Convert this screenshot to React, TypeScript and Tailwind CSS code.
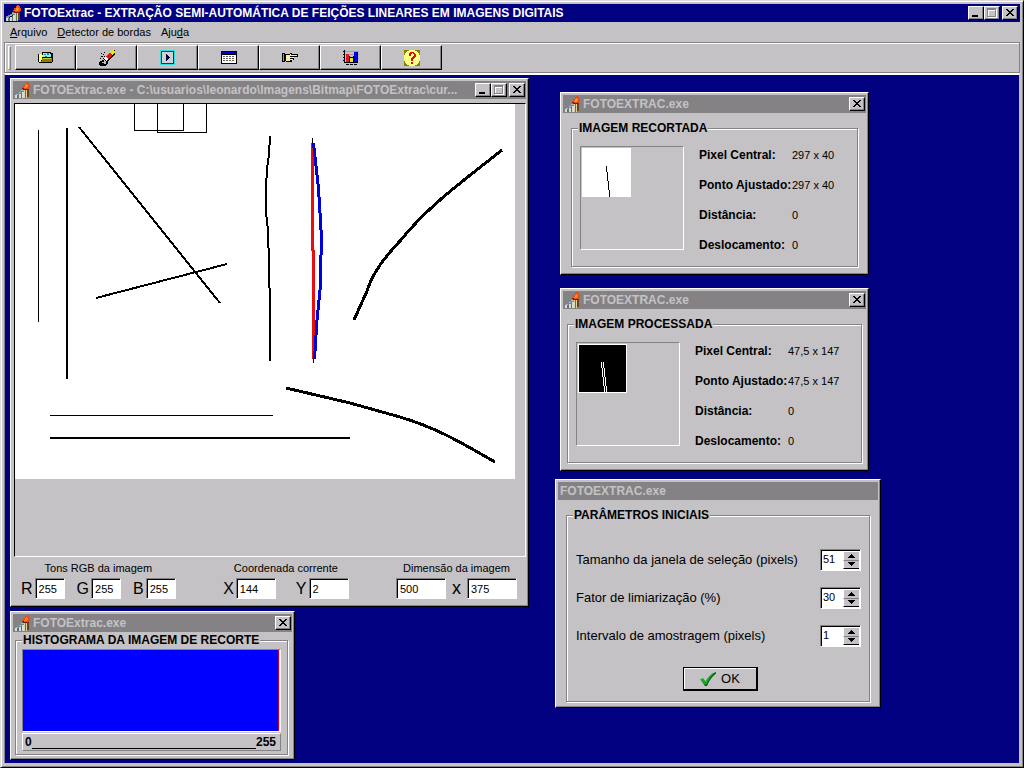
import React, { useId, useState } from "react";

const FACE = "bg-[#c4c2c4]";
const RAISED =
  "border border-t-white border-l-white border-r-black border-b-black shadow-[inset_-1px_-1px_#848284]";
const SUNKEN =
  "border border-t-[#848284] border-l-[#848284] border-r-white border-b-white shadow-[inset_1px_1px_#000]";

function AppIcon() {
  return (
    <svg aria-hidden="true" className="h-4 w-4 shrink-0" viewBox="0 0 16 16" shapeRendering="crispEdges">
      <path d="M6 7h3v3h-3v1h-2v1h-2v1h-2v-2h2v-1h2v-1h2z" fill="#708c94" />
      <path d="M6 8h3v1h-3z M4 10h2v1h-2z M1 12h2v1h-2z" fill="#a8b8bc" />
      <path d="M0 13h2v3h-2z M4 12h2v4h-2z M7 10h2v6h-2z" fill="#d8dcd8" />
      <path d="M2 13h2v3h-2z M6 11h1v5h-1z" fill="#647068" />
      <path d="M9 8h3v8h-3z" fill="#d9d2a4" />
      <path d="M10 8h1v8h-1z" fill="#5a7a4a" />
      <path d="M12 7h2v8h-2z" fill="#6a4020" />
      <path d="M11 0h2v1h1v2h1v3h-1v1h-7v-2h1v-2h2v-2h1z" fill="#f04a12" />
      <path d="M11 2h1v1h1v2h-1v1h-3v-1h1v-2h1z" fill="#ff8a2a" />
      <path d="M7 6h2v1h5v1h-6v-1h-1z" fill="#7c1c08" />
    </svg>
  );
}

function CaptionButton({ kind }: { kind: "Minimizar" | "Maximizar" | "Fechar" }) {
  return (
    <button
      type="button"
      aria-label={kind}
      className={`flex h-[14px] w-4 items-center justify-center ${FACE} ${RAISED}`}
    >
      <svg aria-hidden="true" className="h-3 w-3.5 shrink-0" viewBox="0 0 14 12" shapeRendering="crispEdges">
        {kind === "Minimizar" && <path d="M3 8h6v2h-6z" fill="#000" />}
        {kind === "Maximizar" && (
          <>
            <path d="M3 2h9v9h-9z M4 4v6h7v-6z" fill="#fff" fillRule="evenodd" />
            <path d="M2 1h9v9h-9z M3 3v6h7v-6z" fill="#848284" fillRule="evenodd" />
            <path d="M3 3h7v1h-7z M3 3h1v6h-1z" fill="#fff" />
          </>
        )}
        {kind === "Fechar" && (
          <path
            d="M3 2h2v1h-2z M4 3h2v1h-2z M5 4h2v1h-2z M6 5h2v1h-2z M5 6h2v1h-2z M4 7h2v1h-2z M3 8h2v1h-2z M9 2h2v1h-2z M8 3h2v1h-2z M7 4h2v1h-2z M7 6h2v1h-2z M8 7h2v1h-2z M9 8h2v1h-2z"
            fill="#000"
          />
        )}
      </svg>
    </button>
  );
}

function TitleBar({
  title,
  active = false,
  icon = true,
  controls = "close",
}: {
  title: string;
  active?: boolean;
  icon?: boolean;
  controls?: "all" | "close" | "none";
}) {
  return (
    <header
      className={`flex h-[18px] shrink-0 items-center gap-0.5 pl-0.5 ${
        active ? "bg-[#000080] pr-0.5 text-white" : "bg-[#848284] pr-px text-[#c4c2c4]"
      }`}
    >
      {icon && <AppIcon />}
      <h2 className="min-w-0 flex-1 text-xs leading-4 font-bold whitespace-nowrap">{title}</h2>
      {controls === "all" && (
        <div className="flex">
          <CaptionButton kind="Minimizar" />
          <CaptionButton kind="Maximizar" />
        </div>
      )}
      {controls !== "none" && <CaptionButton kind="Fechar" />}
    </header>
  );
}

function Win({ className, children }: { className: string; children: React.ReactNode }) {
  return (
    <section className={`absolute flex flex-col p-0.5 ${FACE} ${RAISED} ${className}`}>{children}</section>
  );
}

function Group({ title, className, children }: { title: string; className: string; children: React.ReactNode }) {
  return (
    <fieldset
      className={`min-w-0 border border-[#848284] shadow-[1px_1px_#fff,inset_1px_1px_#fff] ${className}`}
    >
      <legend className={`ml-1.5 px-px text-xs leading-4 font-bold ${FACE}`}>{title}</legend>
      {children}
    </fieldset>
  );
}

const toolbar: { label: string; icon: React.ReactNode }[] = [
  {
    label: "Abrir",
    icon: (
      <>
        <path d="M0 4h4v-2h9v1h2v9h-1v1h-13v-1h-1z" fill="#000" />
        <path d="M1 4h3v1h1v2h-1v3h-1v2h-2z" fill="#ffff84" />
        <path d="M5 3h7v1h1v3h-8z" fill="#8ff0f0" />
        <path d="M6 4h2v1h-2z M9 3h2v2h-2z M7 6h2v1h-2z" fill="#1c8a8a" />
        <path d="M4 8h10v4h-11v-1h1z" fill="#848200" />
        <path d="M5 8h8v1h-8z" fill="#c8c83c" />
      </>
    ),
  },
  {
    label: "Apagar",
    icon: (
      <>
        <path d="M16 1L6 11" stroke="#000" strokeWidth="5" />
        <path d="M15 1L11 5" stroke="#f2e21c" strokeWidth="3" />
        <path d="M12 4L8 8" stroke="#e01818" strokeWidth="3" />
        <path d="M8 8L6 10" stroke="#fff" strokeWidth="3" />
        <path d="M0 12h1v-1h2v-1h2v2h-2v1h2v1h2v-2h1v-1h1v3h-1v1h-1v1h-6v-1h-1z M2 3h1v1h-1z M5 2h1v1h-1z M4 4h1v1h-1z M2 6h2v1h-2z M1 8h1v1h-1z M4 8h1v1h-1z M5 6h1v1h-1z" fill="#000" />
      </>
    ),
  },
  {
    label: "Executar",
    icon: (
      <>
        <path d="M0 0h15v15h-15z" fill="#30dede" />
        <path d="M1 1h13v13h-13z" fill="#303430" />
        <path d="M2 2h11v11h-11z" fill="#d2d0d2" />
        <path d="M6 4h1v1h1v1h1v1h1v1h-1v1h-1v1h-1v1h-1z" fill="#000040" />
      </>
    ),
  },
  {
    label: "Tabela",
    icon: (
      <>
        <path d="M0 1h16v13h-16z" fill="#000" />
        <path d="M1 2h14v2h-14z" fill="#0000d8" />
        <path d="M1 5h14v8h-14z" fill="#fff" />
        <path d="M2 6h12v1h-12z M2 8h12v1h-12z M2 10h12v1h-12z" fill="#606060" />
        <path d="M4 5h1v8h-1z M7 5h1v8h-1z M10 5h1v8h-1z M13 5h1v8h-1z" fill="#fff" />
      </>
    ),
  },
  {
    label: "Selecionar",
    icon: (
      <>
        <path d="M0 3h3v9h-3z" fill="#000" />
        <path d="M1 4h1v7h-1z" fill="#20c8c8" />
        <path d="M3 4h5v-1h2v1h6v3h-4v3h-2v2h-6v-1h-1z" fill="#000" />
        <path d="M4 5h4v-1h1v1h6v1h-5v1h2v1h-3v1h2v1h-3v1h-4z" fill="#ffef9c" />
        <path d="M8 6h3v1h-3z M8 8h3v1h-3z" fill="#000" />
      </>
    ),
  },
  {
    label: "Histograma",
    icon: (
      <>
        <path d="M2 1h14v1h-14z M2 4h14v1h-14z M2 8h14v1h-14z" fill="#a09ea0" />
        <path d="M1 0h1v12h13v1h-14z" fill="#000" />
        <path d="M0 1h1v1h-1z M0 4h1v1h-1z M0 7h1v1h-1z M0 10h1v1h-1z M3 14h3v1h-3z M7 14h3v1h-3z M11 14h3v1h-3z" fill="#000" />
        <path d="M3 4h3v8h-3z" fill="#e01818" />
        <path d="M6 6h1v6h-1z M7 7h3v1h-3z" fill="#000" />
        <path d="M7 8h3v4h-3z" fill="#f2e21c" />
        <path d="M11 2h3v10h-3z" fill="#0000e0" />
        <path d="M10 6h1v6h-1z M14 2h1v10h-1z" fill="#000" />
      </>
    ),
  },
  {
    label: "Ajuda",
    icon: (
      <>
        <path d="M0 0h16v16h-16z" fill="#848200" />
        <path d="M5 0h6v1h2v1h1v1h1v2h1v6h-1v2h-1v1h-1v1h-2v1h-6v-1h-2v-1h-1v-1h-1v-2h-1v-6h1v-2h1v-1h1v-1h2z" fill="#ffff84" />
        <path d="M6 2h4v1h1v1h1v3h-1v1h-1v1h-1v2h-2v-3h1v-1h1v-1h1v-2h-1v-1h-1v1h-1v2h-2v-3h1z M7 12h2v2h-2z" fill="#d01010" />
      </>
    ),
  },
];

function SourceImage() {
  return (
    <svg
      role="img"
      aria-label="Imagem"
      className="block h-[375px] w-[500px] bg-white"
      viewBox="0 0 500 375"
      fill="none"
      stroke="#000"
      strokeWidth="2"
      shapeRendering="crispEdges"
    >
      <path d="M23.500 26V218 M119.500 -2V26.500H168.500V-2 M142.500 -2V28.500H191.500V-2" strokeWidth="1" />
      <path d="M52 24V275 M64 23L205 199 M81 194L212 160" />
      <path d="M255 32L254 50L252 65L251 84V108L253 126L254 160L255 206V257" />
      <path d="M35 311.500H258" strokeWidth="1" />
      <path d="M35 334H335" />
      <path
        d="M487 46L468 61C440 83 410 106 385 137C370 153 358 168 352 187L339 216"
        strokeWidth="3"
      />
      <path d="M271 284L335 299L385 313C425 325 450 341 480 358" strokeWidth="3" />
      <path d="M297.500 34V40 M298.500 254V259" strokeWidth="1" />
      <path d="M297.500 39V146L298.500 147V255" stroke="#e60e0e" strokeWidth="3" />
      <path d="M298.500 39L303.500 84L306 126V151L305 186L302 216L299.500 255" stroke="#0000dc" strokeWidth="3" />
    </svg>
  );
}

function Field({
  label,
  value,
  width,
  hideLabel = false,
}: {
  label: string;
  value: string;
  width: string;
  hideLabel?: boolean;
}) {
  const id = useId();
  return (
    <div className="flex items-center gap-0.5">
      {!hideLabel && (
        <label htmlFor={id} className="text-base leading-5">
          {label}
        </label>
      )}
      <input
        id={id}
        aria-label={label}
        defaultValue={value}
        className={`h-[21px] bg-white px-[3px] text-[11px] leading-4 outline-none ${SUNKEN} ${width}`}
      />
    </div>
  );
}

function InfoPanel({
  title,
  groupClass,
  preview,
  rows,
}: {
  title: string;
  groupClass: string;
  preview: React.ReactNode;
  rows: [string, string][];
}) {
  return (
    <Group title={title} className={groupClass}>
      <div className="flex gap-[15px] pt-1 pl-2">
        <div className="mt-1.5 h-[104px] w-[104px] shrink-0 border border-t-[#848284] border-l-[#848284] border-r-white border-b-white">
          {preview}
        </div>
        <dl className="grid h-[120px] flex-1 grid-cols-[93px_1fr] grid-rows-4 items-center leading-4">
          {rows.map(([k, v]) => (
            <React.Fragment key={k}>
              <dt className="text-xs leading-4 font-bold whitespace-nowrap">{k}</dt>
              <dd className="text-[11px] leading-4">{v}</dd>
            </React.Fragment>
          ))}
        </dl>
      </div>
    </Group>
  );
}

function Spinner({ label, initial }: { label: string; initial: number }) {
  const id = useId();
  const [value, setValue] = useState(initial);
  return (
    <div className="flex items-center justify-between">
      <label htmlFor={id} className="text-[13px] leading-5">
        {label}
      </label>
      <div className={`flex h-[22px] w-[41px] bg-white p-px ${SUNKEN}`}>
        <input
          id={id}
          value={value}
          onChange={(e) => setValue(Number(e.target.value) || 0)}
          className="w-5 min-w-0 flex-1 self-start bg-transparent pl-px text-[11px] leading-4 outline-none"
        />
        <div className="flex w-4 flex-col">
          <button
            type="button"
            aria-label={`Aumentar ${label}`}
            onClick={() => setValue(value + 1)}
            className={`flex flex-1 items-center justify-center border-t border-l border-white ${FACE}`}
          >
            <svg aria-hidden="true" className="h-1 w-[7px]" viewBox="0 0 7 4" shapeRendering="crispEdges">
              <path d="M3 0h1v1h1v1h1v1h1v1h-7v-1h1v-1h1v-1h1z" fill="#000" />
            </svg>
          </button>
          <button
            type="button"
            aria-label={`Diminuir ${label}`}
            onClick={() => setValue(value - 1)}
            className={`flex flex-1 items-center justify-center border-t border-b border-l border-t-[#848284] border-b-black border-l-white ${FACE}`}
          >
            <svg aria-hidden="true" className="h-1 w-[7px]" viewBox="0 0 7 4" shapeRendering="crispEdges">
              <path d="M0 0h7v1h-1v1h-1v1h-1v1h-1v-1h-1v-1h-1v-1h-1z" fill="#000" />
            </svg>
          </button>
        </div>
      </div>
    </div>
  );
}

export default function App() {
  return (
    <main
      className={`flex min-h-screen flex-col border border-t-[#dcdadc] border-l-[#dcdadc] border-r-black border-b-black p-[3px] pb-1 font-["Liberation_Sans",Arial,sans-serif] text-black shadow-[inset_1px_1px_#fff,inset_-1px_-1px_#848284] ${FACE}`}
    >
      <TitleBar
        active
        controls="all"
        title="FOTOExtrac - EXTRAÇÃO SEMI-AUTOMÁTICA DE FEIÇÕES LINEARES EM IMAGENS DIGITAIS"
      />

      <nav className="flex h-5 shrink-0 items-center gap-2.5 pl-1.5 text-[11px] leading-4">
        <button type="button">
          <u>A</u>rquivo
        </button>
        <button type="button">
          <u>D</u>etector de bordas
        </button>
        <button type="button">
          Aju<u>d</u>a
        </button>
      </nav>

      <div
        role="toolbar"
        className="flex h-[31px] shrink-0 items-center border border-[#848284] px-[3px] shadow-[inset_1px_1px_#fff]"
      >
        <span className="mr-1 h-6 w-[3px] border border-t-white border-l-white border-r-[#848284] border-b-[#848284]" />
        {toolbar.map((t) => (
          <button
            key={t.label}
            type="button"
            aria-label={t.label}
            className="flex h-[25px] w-[61px] items-center justify-center border border-t-white border-l-white border-r-black border-b-black shadow-[inset_-1px_-1px_#848284]"
          >
            <svg aria-hidden="true" className="h-4 w-4" viewBox="0 0 16 16" shapeRendering="crispEdges">
              {t.icon}
            </svg>
          </button>
        ))}
      </div>

      <div className="relative min-h-[690px] flex-1 overflow-hidden border-t-2 border-r border-l border-t-white border-r-[#c4c2c4] border-l-[#848284] bg-[#000080]">
        <Win className="top-[3px] left-[5px] h-[529px] w-[519px]">
          <TitleBar
            controls="all"
            title="FOTOExtrac.exe - C:\usuarios\leonardo\Imagens\Bitmap\FOTOExtrac\cur..."
          />
          <div className="mt-1 ml-px h-[454px] border border-t-black border-l-black border-r-white border-b-white">
            <SourceImage />
          </div>
          <div className="flex justify-between pt-[3px] pr-[9px] pl-2">
            <div className="flex flex-col items-center gap-0.5">
              <p className="text-[11px] leading-4">Tons RGB da imagem</p>
              <div className="flex gap-3">
                <Field label="R" value="255" width="w-[30px]" />
                <Field label="G" value="255" width="w-[30px]" />
                <Field label="B" value="255" width="w-[30px]" />
              </div>
            </div>
            <div className="flex flex-col items-center gap-0.5">
              <p className="text-[11px] leading-4">Coordenada corrente</p>
              <div className="flex gap-5">
                <Field label="X" value="144" width="w-10" />
                <Field label="Y" value="2" width="w-10" />
              </div>
            </div>
            <div className="flex flex-col items-center gap-0.5">
              <p className="text-[11px] leading-4">Dimensão da imagem</p>
              <div className="flex gap-1.5">
                <Field label="Largura" hideLabel value="500" width="w-[50px]" />
                <div className="flex gap-1.5">
                  <span className="text-lg leading-5">x</span>
                  <Field label="Altura" hideLabel value="375" width="w-[50px]" />
                </div>
              </div>
            </div>
          </div>
        </Win>

        <Win className="top-[536px] left-[5px] h-[149px] w-[285px]">
          <TitleBar title="FOTOExtrac.exe" />
          <Group title="HISTOGRAMA DA IMAGEM DE RECORTE" className="mr-1 ml-0.5 h-[123px]">
            <div className="mx-1.5 mt-px h-[83px] border border-t-[#848284] border-l-[#848284] border-r-white border-b-white bg-[#ffd8d0] pr-px">
              <div className="h-full border-r border-[#c00030] bg-[#0000ff]" />
            </div>
            <div className="mx-1.5 mt-px flex h-[18px] items-center border border-t-white border-l-white border-r-[#848284] border-b-[#848284] px-0.5 text-xs leading-4 font-bold">
              <span>0</span>
              <span className="h-3.5 flex-1 border-b border-black" />
              <span className="pr-0.5">255</span>
            </div>
          </Group>
        </Win>

        <Win className="top-[17px] left-[555px] h-[183px] w-[309px]">
          <TitleBar title="FOTOEXTRAC.exe" />
          <InfoPanel
            title="IMAGEM RECORTADA"
            groupClass="mx-2 mt-[7px] h-[147px]"
            rows={[
              ["Pixel Central:", "297 x 40"],
              ["Ponto Ajustado:", "297 x 40"],
              ["Distância:", "0"],
              ["Deslocamento:", "0"],
            ]}
            preview={
              <svg role="img" aria-label="Recorte" className="block h-[51px] w-[51px]" viewBox="0 0 51 51" shapeRendering="crispEdges">
                <path d="M1 1h49v49h-49z" fill="#fff" />
                <path d="M25.500 19v6M26.500 25v9M27.500 34v9M28.500 43v7" stroke="#000" strokeWidth="1" />
              </svg>
            }
          />
        </Win>

        <Win className="top-[213px] left-[555px] h-[183px] w-[309px]">
          <TitleBar title="FOTOEXTRAC.exe" />
          <InfoPanel
            title="IMAGEM PROCESSADA"
            groupClass="mx-1 mt-[7px] h-[147px]"
            rows={[
              ["Pixel Central:", "47,5 x 147"],
              ["Ponto Ajustado:", "47,5 x 147"],
              ["Distância:", "0"],
              ["Deslocamento:", "0"],
            ]}
            preview={
              <svg role="img" aria-label="Processada" className="block h-[51px] w-[51px]" viewBox="0 0 51 51" shapeRendering="crispEdges">
                <path d="M1 1h49v49h-49z" fill="#fff" />
                <path d="M2 2h47v47h-47z" fill="#000" />
                <path
                  d="M24.500 19v6M25.500 25v9M26.500 34v9M27.500 43v7M26.500 19v6M27.500 25v9M28.500 34v9M29.500 43v7"
                  stroke="#fff"
                  strokeWidth="1"
                />
              </svg>
            }
          />
        </Win>

        <Win className="top-[404px] left-[550px] h-[229px] w-[326px]">
          <TitleBar title="FOTOEXTRAC.exe" icon={false} controls="none" />
          <Group title="PARÂMETROS INICIAIS" className="mx-2 mt-[7px] h-[195px]">
            <div className="flex flex-col gap-4 pt-[26px] pr-2 pl-[9px]">
              <Spinner label="Tamanho da janela de seleção (pixels)" initial={51} />
              <Spinner label="Fator de limiarização (%)" initial={30} />
              <Spinner label="Intervalo de amostragem (pixels)" initial={1} />
            </div>
            <div className="mt-5 ml-1 flex justify-center">
              <button
                type="button"
                className="flex h-6 w-[75px] items-center justify-center gap-1 border-t border-r-2 border-b-2 border-l border-black text-[13px] leading-5 shadow-[inset_1px_1px_#fff]"
              >
                <svg aria-hidden="true" className="h-4 w-[18px]" viewBox="0 0 18 16">
                  <path d="M2 9L4.500 8L7 11.500C9 7 12 3 17 1L17 2.500C12.500 6 10 10 8 15H6Z" fill="#055a0c" />
                  <path d="M1 8.500L4 7L6.500 10.500C9 6 12 2.500 16.500 1C12 5 9.500 9 7.500 13.500H5.500Z" fill="#18a828" />
                </svg>
                OK
              </button>
            </div>
          </Group>
        </Win>
      </div>
    </main>
  );
}
